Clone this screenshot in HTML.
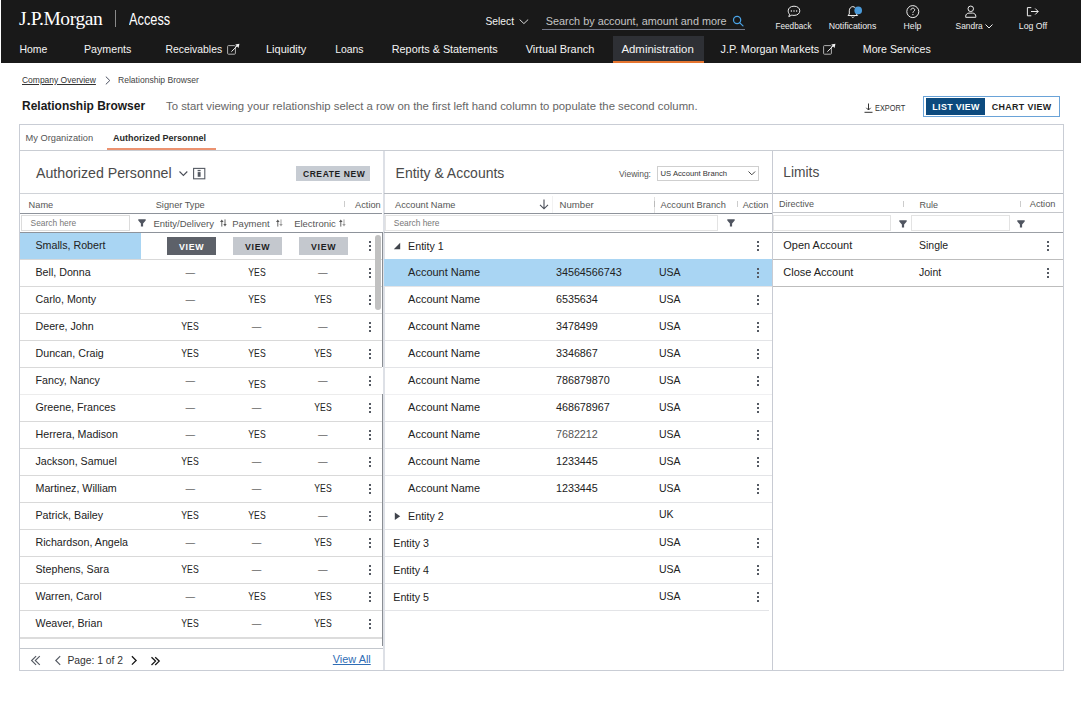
<!DOCTYPE html>
<html><head><meta charset="utf-8"><title>Relationship Browser</title>
<style>
html,body{margin:0;padding:0;background:#fff;width:1083px;height:727px;overflow:hidden;}
body{position:relative;font-family:"Liberation Sans",sans-serif;}
.t{position:absolute;white-space:nowrap;font-family:"Liberation Sans",sans-serif;}
.r{position:absolute;display:block;}
</style></head><body>
<div class="r" style="left:1px;top:0px;width:1080px;height:63px;background:#191919;"></div>
<div class="t" style="left:19px;top:9.00px;line-height:20px;font-size:19.5px;color:#fff;font-weight:normal;font-family:'Liberation Serif',serif;letter-spacing:-0.4px;">J.P.Morgan</div>
<div class="r" style="left:115px;top:10px;width:1px;height:17px;background:#8a8a8a;"></div>
<div class="t" style="left:128.6px;top:8.70px;line-height:20px;font-size:16.3px;color:#fff;font-weight:normal;transform:scaleX(0.785);transform-origin:0 50%;">Access</div>
<div class="t" style="left:485.5px;top:11.60px;line-height:20px;font-size:10.25px;color:#f2f2f2;font-weight:normal;">Select</div>
<svg class="r" style="left:519px;top:19px;" width="10" height="6" viewBox="0 0 10 6"><path d="M0.6 0.5 L4.9 4.6 L9.2 0.5" fill="none" stroke="#e6e6e6" stroke-width="0.95"/></svg>
<div class="r" style="left:542px;top:29px;width:203px;height:1px;background:#74798a;"></div>
<div class="t" style="left:545.8px;top:10.90px;line-height:20px;font-size:10.85px;color:#c4c4c4;font-weight:normal;">Search by account, amount and more</div>
<svg class="r" style="left:732px;top:15px;" width="13" height="13" viewBox="0 0 13 13"><circle cx="5.1" cy="5.0" r="3.6" fill="none" stroke="#4aa3e6" stroke-width="1.25"/><path d="M7.6 7.6 L11 10.9" stroke="#4aa3e6" stroke-width="1.25" stroke-linecap="round"/></svg>
<svg class="r" style="left:787px;top:5px;" width="14" height="13" viewBox="0 0 14 13"><path d="M7 1.2 C10.6 1.2 12.8 3.2 12.8 5.8 C12.8 8.4 10.6 10.4 7 10.4 C6.2 10.4 5.4 10.3 4.8 10.1 L1.8 11.6 L2.6 9.2 C1.6 8.4 1.2 7.2 1.2 5.8 C1.2 3.2 3.4 1.2 7 1.2 Z" fill="none" stroke="#eee" stroke-width="1"/><circle cx="4.4" cy="6.1" r="0.75" fill="#eee"/><circle cx="7" cy="6.1" r="0.75" fill="#eee"/><circle cx="9.6" cy="6.1" r="0.75" fill="#eee"/></svg>
<div class="t" style="left:693.5px;width:200px;text-align:center;top:16.50px;line-height:20px;font-size:8.2px;color:#eee;font-weight:normal;">Feedback</div>
<svg class="r" style="left:845px;top:4px;" width="18" height="15" viewBox="0 0 18 15"><path d="M3 11.5 L4.3 10 L4.3 6.8 C4.3 4.4 5.8 2.8 7.8 2.6 C9.8 2.8 11.3 4.4 11.3 6.8 L11.3 10 L12.6 11.5 Z" fill="none" stroke="#eee" stroke-width="1"/><path d="M6.4 12.6 C6.8 13.6 8.8 13.6 9.2 12.6" fill="none" stroke="#eee" stroke-width="1"/><circle cx="13.2" cy="6.4" r="3.8" fill="#4a9ad9"/></svg>
<div class="t" style="left:752.5px;width:200px;text-align:center;top:15.50px;line-height:20px;font-size:8.76px;color:#eee;font-weight:normal;">Notifications</div>
<svg class="r" style="left:905px;top:4px;" width="16" height="16" viewBox="0 0 16 16"><circle cx="7.8" cy="7.6" r="6" fill="none" stroke="#eee" stroke-width="1"/><path d="M5.9 6.2 C5.9 4.9 6.8 4.2 7.8 4.2 C8.9 4.2 9.7 4.9 9.7 5.9 C9.7 7.2 7.9 7.3 7.9 8.8" fill="none" stroke="#eee" stroke-width="1"/><circle cx="7.9" cy="10.6" r="0.7" fill="#eee"/></svg>
<div class="t" style="left:812.5px;width:200px;text-align:center;top:15.50px;line-height:20px;font-size:8.7px;color:#eee;font-weight:normal;">Help</div>
<svg class="r" style="left:963px;top:4px;" width="16" height="16" viewBox="0 0 16 16"><circle cx="7.75" cy="4.8" r="2.75" fill="none" stroke="#eee" stroke-width="1"/><path d="M2.7 13.3 L2.7 12.2 C2.7 10.3 4.2 9.1 6 9.1 L9.5 9.1 C11.3 9.1 12.8 10.3 12.8 12.2 L12.8 13.3 Z" fill="none" stroke="#eee" stroke-width="1"/></svg>
<div class="t" style="left:955.6px;top:15.50px;line-height:20px;font-size:8.4px;color:#eee;font-weight:normal;">Sandra</div>
<svg class="r" style="left:985px;top:24px;" width="8" height="5" viewBox="0 0 8 5"><path d="M0.5 0.5 L4 4 L7.5 0.5" fill="none" stroke="#eee" stroke-width="1"/></svg>
<svg class="r" style="left:1025px;top:4px;" width="16" height="16" viewBox="0 0 16 16"><path d="M6.3 3.6 L2.4 3.6 L2.4 11.8 L6.3 11.8" fill="none" stroke="#eee" stroke-width="1"/><path d="M6 7.5 L13.2 7.5 M10.2 4.5 L13.2 7.5 L10.2 10.5" fill="none" stroke="#eee" stroke-width="1"/></svg>
<div class="t" style="left:933px;width:200px;text-align:center;top:15.50px;line-height:20px;font-size:8.7px;color:#eee;font-weight:normal;">Log Off</div>
<div class="r" style="left:613px;top:36px;width:91px;height:27px;background:#2e3035;"></div>
<div class="r" style="left:613px;top:61px;width:91px;height:2px;background:#e5742f;"></div>
<div class="t" style="left:19.4px;top:40.20px;line-height:20px;font-size:10.49px;color:#f4f4f4;font-weight:normal;">Home</div>
<div class="t" style="left:84.0px;top:39.20px;line-height:20px;font-size:10.66px;color:#f4f4f4;font-weight:normal;">Payments</div>
<div class="t" style="left:165.6px;top:40.20px;line-height:20px;font-size:10.38px;color:#f4f4f4;font-weight:normal;">Receivables</div>
<div class="t" style="left:266.0px;top:39.20px;line-height:20px;font-size:11.01px;color:#f4f4f4;font-weight:normal;">Liquidity</div>
<div class="t" style="left:335.2px;top:40.20px;line-height:20px;font-size:10.42px;color:#f4f4f4;font-weight:normal;">Loans</div>
<div class="t" style="left:391.79999999999995px;top:39.20px;line-height:20px;font-size:10.82px;color:#f4f4f4;font-weight:normal;">Reports &amp; Statements</div>
<div class="t" style="left:525.6999999999999px;top:39.20px;line-height:20px;font-size:10.98px;color:#f4f4f4;font-weight:normal;">Virtual Branch</div>
<div class="t" style="left:621.4px;top:39.20px;line-height:20px;font-size:11.43px;color:#f4f4f4;font-weight:normal;">Administration</div>
<div class="t" style="left:720.6px;top:39.20px;line-height:20px;font-size:10.84px;color:#f4f4f4;font-weight:normal;">J.P. Morgan Markets</div>
<div class="t" style="left:862.8px;top:39.20px;line-height:20px;font-size:10.63px;color:#f4f4f4;font-weight:normal;">More Services</div>
<svg class="r" style="left:226px;top:43px;" width="14" height="13" viewBox="0 0 14 13"><rect x="1.6" y="2.6" width="7.8" height="8.6" rx="0.8" fill="none" stroke="#b0b0b0" stroke-width="1"/><path d="M5.4 8.7 L11.3 2.8" stroke="#f4f4f4" stroke-width="1"/><path d="M13.4 0.75 L9.2 1.5 L12.6 4.9 Z" fill="#f4f4f4"/></svg>
<svg class="r" style="left:822px;top:43px;" width="14" height="13" viewBox="0 0 14 13"><rect x="1.6" y="2.6" width="7.8" height="8.6" rx="0.8" fill="none" stroke="#b0b0b0" stroke-width="1"/><path d="M5.4 8.7 L11.3 2.8" stroke="#f4f4f4" stroke-width="1"/><path d="M13.4 0.75 L9.2 1.5 L12.6 4.9 Z" fill="#f4f4f4"/></svg>
<div class="t" style="left:22px;top:70.00px;line-height:20px;font-size:8.48px;color:#333;font-weight:normal;text-decoration:underline;">Company Overview</div>
<svg class="r" style="left:105px;top:76px;" width="6" height="9" viewBox="0 0 6 9"><path d="M0.8 0.6 L4.8 4.5 L0.8 8.4" fill="none" stroke="#4a5060" stroke-width="1"/></svg>
<div class="t" style="left:118px;top:70.00px;line-height:20px;font-size:8.57px;color:#444;font-weight:normal;">Relationship Browser</div>
<div class="t" style="left:22px;top:96.00px;line-height:20px;font-size:11.97px;color:#1a1a1a;font-weight:bold;">Relationship Browser</div>
<div class="t" style="left:166px;top:96.00px;line-height:20px;font-size:11.35px;color:#666;font-weight:normal;">To start viewing your relationship select a row on the first left hand column to populate the second column.</div>
<svg class="r" style="left:864px;top:103px;" width="9" height="10" viewBox="0 0 9 10"><path d="M4.5 0.5 L4.5 7 M2.3 4.8 L4.5 7 L6.7 4.8" fill="none" stroke="#333" stroke-width="1"/><path d="M0.5 9.3 L8.5 9.3" stroke="#333" stroke-width="1"/></svg>
<div class="t" style="left:874.8px;top:98.20px;line-height:20px;font-size:9.6px;color:#333;font-weight:normal;transform:scaleX(0.77);transform-origin:0 50%;">EXPORT</div>
<div class="r" style="left:923px;top:96px;width:137px;height:21px;background:#fff;border:1px solid #6aa3d8;box-sizing:border-box;"></div>
<div class="r" style="left:926px;top:98px;width:59px;height:17px;background:#0c4a7e;"></div>
<div class="t" style="left:932.3px;top:96.80px;line-height:20px;font-size:8.9px;color:#fff;font-weight:bold;letter-spacing:0.35px;">LIST VIEW</div>
<div class="t" style="left:991.8px;top:96.80px;line-height:20px;font-size:8.9px;color:#1e1e1e;font-weight:bold;letter-spacing:0.35px;">CHART VIEW</div>
<div class="r" style="left:19px;top:124px;width:1045px;height:547px;background:#fff;border:1px solid #c9cdd5;box-sizing:border-box;"></div>
<div class="t" style="left:25.5px;top:128.00px;line-height:20px;font-size:9.29px;color:#555;font-weight:normal;">My Organization</div>
<div class="t" style="left:113px;top:128.00px;line-height:20px;font-size:9.0px;color:#2a2a2a;font-weight:bold;">Authorized Personnel</div>
<div class="r" style="left:20px;top:150px;width:1043px;height:1px;background:#c9cdd3;"></div>
<div class="r" style="left:107px;top:148px;width:109px;height:2px;background:#eb9270;"></div>
<div class="r" style="left:383px;top:151px;width:2px;height:519px;background:#dde0e6;"></div>
<div class="r" style="left:772px;top:151px;width:1px;height:519px;background:#c8cbd3;"></div>
<div class="t" style="left:36px;top:163.00px;line-height:20px;font-size:14.2px;color:#4a4a4a;font-weight:normal;">Authorized Personnel</div>
<svg class="r" style="left:179px;top:171px;" width="10" height="6" viewBox="0 0 10 6"><path d="M0.5 0.5 L4.4 4.4 L8.3 0.5" fill="none" stroke="#4a4e58" stroke-width="1.1"/></svg>
<svg class="r" style="left:193px;top:167px;" width="13" height="13" viewBox="0 0 13 13"><rect x="0.6" y="1.4" width="11.2" height="10.4" fill="none" stroke="#555a63" stroke-width="1.1"/><rect x="4.6" y="2.9" width="3" height="1.3" fill="#555a63"/><rect x="4.7" y="5.1" width="2.9" height="4.7" fill="#555a63"/></svg>
<div class="r" style="left:296px;top:166px;width:74px;height:15px;background:#c7ccd3;"></div>
<div class="t" style="left:302.9px;top:163.60px;line-height:20px;font-size:8.5px;color:#1e1e1e;font-weight:bold;letter-spacing:0.6px;">CREATE NEW</div>
<div class="r" style="left:20px;top:193px;width:362px;height:1px;background:#d0d3d8;"></div>
<div class="t" style="left:28.6px;top:194.80px;line-height:20px;font-size:9.22px;color:#555;font-weight:normal;">Name</div>
<div class="t" style="left:155.7px;top:194.80px;line-height:20px;font-size:9.22px;color:#555;font-weight:normal;">Signer Type</div>
<div class="r" style="left:344px;top:201px;width:1px;height:6px;background:#ccc;"></div>
<div class="t" style="left:355.1px;top:194.80px;line-height:20px;font-size:9.22px;color:#555;font-weight:normal;">Action</div>
<div class="r" style="left:20px;top:213px;width:362px;height:1px;background:#8e939b;"></div>
<div class="r" style="left:21px;top:215px;width:109px;height:16px;background:#fff;border:1px solid #dcdcdc;box-sizing:border-box;"></div>
<div class="t" style="left:30.6px;top:213.20px;line-height:20px;font-size:8.4px;color:#777;font-weight:normal;">Search here</div>
<svg class="r" style="left:138.2px;top:219.2px;" width="8" height="8" viewBox="0 0 8 8"><path d="M0.3 0.3 L7.7 0.3 L7.7 1.4 L5.1 4.4 L5.1 7.6 L2.9 7.6 L2.9 4.4 L0.3 1.4 Z" fill="#505560"/></svg>
<div class="t" style="left:153.4px;top:214.00px;line-height:20px;font-size:9.47px;color:#555;font-weight:normal;">Entity/Delivery</div>
<div class="t" style="left:232.3px;top:214.00px;line-height:20px;font-size:9.47px;color:#555;font-weight:normal;">Payment</div>
<div class="t" style="left:294.2px;top:214.00px;line-height:20px;font-size:9.47px;color:#555;font-weight:normal;">Electronic</div>
<svg class="r" style="left:219.6px;top:219.2px;" width="7" height="8" viewBox="0 0 7 8"><path d="M1.8 2 L1.8 7.6" stroke="#555" stroke-width="0.9"/><path d="M0 3 L1.8 0.4 L3.6 3 Z" fill="#555"/><path d="M5 0.4 L5 6" stroke="#555" stroke-width="0.9"/><path d="M3.3 5 L5 7.6 L6.7 5 Z" fill="#555"/></svg>
<svg class="r" style="left:275.7px;top:219.2px;" width="7" height="8" viewBox="0 0 7 8"><path d="M1.8 2 L1.8 7.6" stroke="#555" stroke-width="0.9"/><path d="M0 3 L1.8 0.4 L3.6 3 Z" fill="#555"/><path d="M5 0.4 L5 6" stroke="#999" stroke-width="0.9"/><path d="M3.3 5 L5 7.6 L6.7 5 Z" fill="#999"/></svg>
<svg class="r" style="left:338.5px;top:219.2px;" width="7" height="8" viewBox="0 0 7 8"><path d="M1.8 2 L1.8 7.6" stroke="#555" stroke-width="0.9"/><path d="M0 3 L1.8 0.4 L3.6 3 Z" fill="#555"/><path d="M5 0.4 L5 6" stroke="#999" stroke-width="0.9"/><path d="M3.3 5 L5 7.6 L6.7 5 Z" fill="#999"/></svg>
<div class="r" style="left:20px;top:232px;width:362px;height:1px;background:#8e939b;"></div>
<div class="r" style="left:20px;top:233px;width:121px;height:26px;background:#a9d5f3;"></div>
<div class="r" style="left:20px;top:259px;width:362px;height:1px;background:#d9d9d9;"></div>
<div class="t" style="left:35.5px;top:234.80px;line-height:20px;font-size:10.68px;color:#222;font-weight:normal;">Smalls, Robert</div>
<div class="r" style="left:167px;top:237px;width:49px;height:18px;background:#5d6169;"></div>
<div class="t" style="left:91.6px;width:200px;text-align:center;top:236.90px;line-height:20px;font-size:8.8px;color:#fff;font-weight:bold;letter-spacing:0.7px;">VIEW</div>
<div class="r" style="left:233px;top:237px;width:49px;height:18px;background:#c4c8ce;"></div>
<div class="t" style="left:157.60000000000002px;width:200px;text-align:center;top:236.90px;line-height:20px;font-size:8.8px;color:#1e1e1e;font-weight:bold;letter-spacing:0.7px;">VIEW</div>
<div class="r" style="left:299px;top:237px;width:49px;height:18px;background:#c4c8ce;"></div>
<div class="t" style="left:223.60000000000002px;width:200px;text-align:center;top:236.90px;line-height:20px;font-size:8.8px;color:#1e1e1e;font-weight:bold;letter-spacing:0.7px;">VIEW</div>
<div class="r" style="left:369px;top:241px;width:2px;height:2px;background:#555a63;"></div>
<div class="r" style="left:369px;top:245px;width:2px;height:2px;background:#555a63;"></div>
<div class="r" style="left:369px;top:249.3px;width:2px;height:2px;background:#555a63;"></div>
<div class="r" style="left:20px;top:286px;width:362px;height:1px;background:#d9d9d9;"></div>
<div class="t" style="left:35.5px;top:261.80px;line-height:20px;font-size:10.68px;color:#222;font-weight:normal;">Bell, Donna</div>
<div class="t" style="left:90.30000000000001px;width:200px;text-align:center;top:262.60px;line-height:20px;font-size:9.6px;color:#222;font-weight:normal;">—</div>
<div class="t" style="left:156.60000000000002px;width:200px;text-align:center;top:262.50px;line-height:20px;font-size:10.3px;color:#222;font-weight:normal;transform:scaleX(0.84);">YES</div>
<div class="t" style="left:222.8px;width:200px;text-align:center;top:262.60px;line-height:20px;font-size:9.6px;color:#222;font-weight:normal;">—</div>
<div class="r" style="left:369px;top:268px;width:2px;height:2px;background:#555a63;"></div>
<div class="r" style="left:369px;top:272px;width:2px;height:2px;background:#555a63;"></div>
<div class="r" style="left:369px;top:276.3px;width:2px;height:2px;background:#555a63;"></div>
<div class="r" style="left:20px;top:313px;width:362px;height:1px;background:#d9d9d9;"></div>
<div class="t" style="left:35.5px;top:288.80px;line-height:20px;font-size:10.68px;color:#222;font-weight:normal;">Carlo, Monty</div>
<div class="t" style="left:90.30000000000001px;width:200px;text-align:center;top:289.60px;line-height:20px;font-size:9.6px;color:#222;font-weight:normal;">—</div>
<div class="t" style="left:156.60000000000002px;width:200px;text-align:center;top:289.50px;line-height:20px;font-size:10.3px;color:#222;font-weight:normal;transform:scaleX(0.84);">YES</div>
<div class="t" style="left:222.8px;width:200px;text-align:center;top:289.50px;line-height:20px;font-size:10.3px;color:#222;font-weight:normal;transform:scaleX(0.84);">YES</div>
<div class="r" style="left:369px;top:295px;width:2px;height:2px;background:#555a63;"></div>
<div class="r" style="left:369px;top:299px;width:2px;height:2px;background:#555a63;"></div>
<div class="r" style="left:369px;top:303.3px;width:2px;height:2px;background:#555a63;"></div>
<div class="r" style="left:20px;top:340px;width:362px;height:1px;background:#d9d9d9;"></div>
<div class="t" style="left:35.5px;top:315.80px;line-height:20px;font-size:10.68px;color:#222;font-weight:normal;">Deere, John</div>
<div class="t" style="left:90.30000000000001px;width:200px;text-align:center;top:316.50px;line-height:20px;font-size:10.3px;color:#222;font-weight:normal;transform:scaleX(0.84);">YES</div>
<div class="t" style="left:156.60000000000002px;width:200px;text-align:center;top:316.60px;line-height:20px;font-size:9.6px;color:#222;font-weight:normal;">—</div>
<div class="t" style="left:222.8px;width:200px;text-align:center;top:316.60px;line-height:20px;font-size:9.6px;color:#222;font-weight:normal;">—</div>
<div class="r" style="left:369px;top:322px;width:2px;height:2px;background:#555a63;"></div>
<div class="r" style="left:369px;top:326px;width:2px;height:2px;background:#555a63;"></div>
<div class="r" style="left:369px;top:330.3px;width:2px;height:2px;background:#555a63;"></div>
<div class="r" style="left:20px;top:367px;width:362px;height:1px;background:#d9d9d9;"></div>
<div class="t" style="left:35.5px;top:342.80px;line-height:20px;font-size:10.68px;color:#222;font-weight:normal;">Duncan, Craig</div>
<div class="t" style="left:90.30000000000001px;width:200px;text-align:center;top:343.50px;line-height:20px;font-size:10.3px;color:#222;font-weight:normal;transform:scaleX(0.84);">YES</div>
<div class="t" style="left:156.60000000000002px;width:200px;text-align:center;top:343.50px;line-height:20px;font-size:10.3px;color:#222;font-weight:normal;transform:scaleX(0.84);">YES</div>
<div class="t" style="left:222.8px;width:200px;text-align:center;top:343.50px;line-height:20px;font-size:10.3px;color:#222;font-weight:normal;transform:scaleX(0.84);">YES</div>
<div class="r" style="left:369px;top:349px;width:2px;height:2px;background:#555a63;"></div>
<div class="r" style="left:369px;top:353px;width:2px;height:2px;background:#555a63;"></div>
<div class="r" style="left:369px;top:357.3px;width:2px;height:2px;background:#555a63;"></div>
<div class="r" style="left:20px;top:394px;width:362px;height:1px;background:#ececec;"></div>
<div class="t" style="left:35.5px;top:369.80px;line-height:20px;font-size:10.68px;color:#222;font-weight:normal;">Fancy, Nancy</div>
<div class="t" style="left:90.30000000000001px;width:200px;text-align:center;top:370.60px;line-height:20px;font-size:9.6px;color:#222;font-weight:normal;">—</div>
<div class="t" style="left:156.60000000000002px;width:200px;text-align:center;top:375.00px;line-height:20px;font-size:10.3px;color:#222;font-weight:normal;transform:scaleX(0.84);">YES</div>
<div class="t" style="left:222.8px;width:200px;text-align:center;top:370.60px;line-height:20px;font-size:9.6px;color:#222;font-weight:normal;">—</div>
<div class="r" style="left:369px;top:376px;width:2px;height:2px;background:#555a63;"></div>
<div class="r" style="left:369px;top:380px;width:2px;height:2px;background:#555a63;"></div>
<div class="r" style="left:369px;top:384.3px;width:2px;height:2px;background:#555a63;"></div>
<div class="r" style="left:20px;top:421px;width:362px;height:1px;background:#d9d9d9;"></div>
<div class="t" style="left:35.5px;top:396.80px;line-height:20px;font-size:10.68px;color:#222;font-weight:normal;">Greene, Frances</div>
<div class="t" style="left:90.30000000000001px;width:200px;text-align:center;top:397.60px;line-height:20px;font-size:9.6px;color:#222;font-weight:normal;">—</div>
<div class="t" style="left:156.60000000000002px;width:200px;text-align:center;top:397.60px;line-height:20px;font-size:9.6px;color:#222;font-weight:normal;">—</div>
<div class="t" style="left:222.8px;width:200px;text-align:center;top:397.50px;line-height:20px;font-size:10.3px;color:#222;font-weight:normal;transform:scaleX(0.84);">YES</div>
<div class="r" style="left:369px;top:403px;width:2px;height:2px;background:#555a63;"></div>
<div class="r" style="left:369px;top:407px;width:2px;height:2px;background:#555a63;"></div>
<div class="r" style="left:369px;top:411.3px;width:2px;height:2px;background:#555a63;"></div>
<div class="r" style="left:20px;top:448px;width:362px;height:1px;background:#d9d9d9;"></div>
<div class="t" style="left:35.5px;top:423.80px;line-height:20px;font-size:10.68px;color:#222;font-weight:normal;">Herrera, Madison</div>
<div class="t" style="left:90.30000000000001px;width:200px;text-align:center;top:424.60px;line-height:20px;font-size:9.6px;color:#222;font-weight:normal;">—</div>
<div class="t" style="left:156.60000000000002px;width:200px;text-align:center;top:424.50px;line-height:20px;font-size:10.3px;color:#222;font-weight:normal;transform:scaleX(0.84);">YES</div>
<div class="t" style="left:222.8px;width:200px;text-align:center;top:424.60px;line-height:20px;font-size:9.6px;color:#222;font-weight:normal;">—</div>
<div class="r" style="left:369px;top:430px;width:2px;height:2px;background:#555a63;"></div>
<div class="r" style="left:369px;top:434px;width:2px;height:2px;background:#555a63;"></div>
<div class="r" style="left:369px;top:438.3px;width:2px;height:2px;background:#555a63;"></div>
<div class="r" style="left:20px;top:475px;width:362px;height:1px;background:#d9d9d9;"></div>
<div class="t" style="left:35.5px;top:450.80px;line-height:20px;font-size:10.68px;color:#222;font-weight:normal;">Jackson, Samuel</div>
<div class="t" style="left:90.30000000000001px;width:200px;text-align:center;top:451.50px;line-height:20px;font-size:10.3px;color:#222;font-weight:normal;transform:scaleX(0.84);">YES</div>
<div class="t" style="left:156.60000000000002px;width:200px;text-align:center;top:451.60px;line-height:20px;font-size:9.6px;color:#222;font-weight:normal;">—</div>
<div class="t" style="left:222.8px;width:200px;text-align:center;top:451.60px;line-height:20px;font-size:9.6px;color:#222;font-weight:normal;">—</div>
<div class="r" style="left:369px;top:457px;width:2px;height:2px;background:#555a63;"></div>
<div class="r" style="left:369px;top:461px;width:2px;height:2px;background:#555a63;"></div>
<div class="r" style="left:369px;top:465.3px;width:2px;height:2px;background:#555a63;"></div>
<div class="r" style="left:20px;top:502px;width:362px;height:1px;background:#d9d9d9;"></div>
<div class="t" style="left:35.5px;top:477.80px;line-height:20px;font-size:10.68px;color:#222;font-weight:normal;">Martinez, William</div>
<div class="t" style="left:90.30000000000001px;width:200px;text-align:center;top:478.60px;line-height:20px;font-size:9.6px;color:#222;font-weight:normal;">—</div>
<div class="t" style="left:156.60000000000002px;width:200px;text-align:center;top:478.60px;line-height:20px;font-size:9.6px;color:#222;font-weight:normal;">—</div>
<div class="t" style="left:222.8px;width:200px;text-align:center;top:478.50px;line-height:20px;font-size:10.3px;color:#222;font-weight:normal;transform:scaleX(0.84);">YES</div>
<div class="r" style="left:369px;top:484px;width:2px;height:2px;background:#555a63;"></div>
<div class="r" style="left:369px;top:488px;width:2px;height:2px;background:#555a63;"></div>
<div class="r" style="left:369px;top:492.3px;width:2px;height:2px;background:#555a63;"></div>
<div class="r" style="left:20px;top:529px;width:362px;height:1px;background:#d9d9d9;"></div>
<div class="t" style="left:35.5px;top:504.80px;line-height:20px;font-size:10.68px;color:#222;font-weight:normal;">Patrick, Bailey</div>
<div class="t" style="left:90.30000000000001px;width:200px;text-align:center;top:505.50px;line-height:20px;font-size:10.3px;color:#222;font-weight:normal;transform:scaleX(0.84);">YES</div>
<div class="t" style="left:156.60000000000002px;width:200px;text-align:center;top:505.50px;line-height:20px;font-size:10.3px;color:#222;font-weight:normal;transform:scaleX(0.84);">YES</div>
<div class="t" style="left:222.8px;width:200px;text-align:center;top:505.60px;line-height:20px;font-size:9.6px;color:#222;font-weight:normal;">—</div>
<div class="r" style="left:369px;top:511px;width:2px;height:2px;background:#555a63;"></div>
<div class="r" style="left:369px;top:515px;width:2px;height:2px;background:#555a63;"></div>
<div class="r" style="left:369px;top:519.3px;width:2px;height:2px;background:#555a63;"></div>
<div class="r" style="left:20px;top:556px;width:362px;height:1px;background:#d9d9d9;"></div>
<div class="t" style="left:35.5px;top:531.80px;line-height:20px;font-size:10.68px;color:#222;font-weight:normal;">Richardson, Angela</div>
<div class="t" style="left:90.30000000000001px;width:200px;text-align:center;top:532.60px;line-height:20px;font-size:9.6px;color:#222;font-weight:normal;">—</div>
<div class="t" style="left:156.60000000000002px;width:200px;text-align:center;top:532.60px;line-height:20px;font-size:9.6px;color:#222;font-weight:normal;">—</div>
<div class="t" style="left:222.8px;width:200px;text-align:center;top:532.50px;line-height:20px;font-size:10.3px;color:#222;font-weight:normal;transform:scaleX(0.84);">YES</div>
<div class="r" style="left:369px;top:538px;width:2px;height:2px;background:#555a63;"></div>
<div class="r" style="left:369px;top:542px;width:2px;height:2px;background:#555a63;"></div>
<div class="r" style="left:369px;top:546.3px;width:2px;height:2px;background:#555a63;"></div>
<div class="r" style="left:20px;top:583px;width:362px;height:1px;background:#d9d9d9;"></div>
<div class="t" style="left:35.5px;top:558.80px;line-height:20px;font-size:10.68px;color:#222;font-weight:normal;">Stephens, Sara</div>
<div class="t" style="left:90.30000000000001px;width:200px;text-align:center;top:559.50px;line-height:20px;font-size:10.3px;color:#222;font-weight:normal;transform:scaleX(0.84);">YES</div>
<div class="t" style="left:156.60000000000002px;width:200px;text-align:center;top:559.60px;line-height:20px;font-size:9.6px;color:#222;font-weight:normal;">—</div>
<div class="t" style="left:222.8px;width:200px;text-align:center;top:559.60px;line-height:20px;font-size:9.6px;color:#222;font-weight:normal;">—</div>
<div class="r" style="left:369px;top:565px;width:2px;height:2px;background:#555a63;"></div>
<div class="r" style="left:369px;top:569px;width:2px;height:2px;background:#555a63;"></div>
<div class="r" style="left:369px;top:573.3px;width:2px;height:2px;background:#555a63;"></div>
<div class="r" style="left:20px;top:610px;width:362px;height:1px;background:#d9d9d9;"></div>
<div class="t" style="left:35.5px;top:585.80px;line-height:20px;font-size:10.68px;color:#222;font-weight:normal;">Warren, Carol</div>
<div class="t" style="left:90.30000000000001px;width:200px;text-align:center;top:586.60px;line-height:20px;font-size:9.6px;color:#222;font-weight:normal;">—</div>
<div class="t" style="left:156.60000000000002px;width:200px;text-align:center;top:586.50px;line-height:20px;font-size:10.3px;color:#222;font-weight:normal;transform:scaleX(0.84);">YES</div>
<div class="t" style="left:222.8px;width:200px;text-align:center;top:586.50px;line-height:20px;font-size:10.3px;color:#222;font-weight:normal;transform:scaleX(0.84);">YES</div>
<div class="r" style="left:369px;top:592px;width:2px;height:2px;background:#555a63;"></div>
<div class="r" style="left:369px;top:596px;width:2px;height:2px;background:#555a63;"></div>
<div class="r" style="left:369px;top:600.3px;width:2px;height:2px;background:#555a63;"></div>
<div class="r" style="left:20px;top:637px;width:362px;height:1px;background:#d9d9d9;"></div>
<div class="t" style="left:35.5px;top:612.80px;line-height:20px;font-size:10.68px;color:#222;font-weight:normal;">Weaver, Brian</div>
<div class="t" style="left:90.30000000000001px;width:200px;text-align:center;top:613.50px;line-height:20px;font-size:10.3px;color:#222;font-weight:normal;transform:scaleX(0.84);">YES</div>
<div class="t" style="left:156.60000000000002px;width:200px;text-align:center;top:613.60px;line-height:20px;font-size:9.6px;color:#222;font-weight:normal;">—</div>
<div class="t" style="left:222.8px;width:200px;text-align:center;top:613.50px;line-height:20px;font-size:10.3px;color:#222;font-weight:normal;transform:scaleX(0.84);">YES</div>
<div class="r" style="left:369px;top:619px;width:2px;height:2px;background:#555a63;"></div>
<div class="r" style="left:369px;top:623px;width:2px;height:2px;background:#555a63;"></div>
<div class="r" style="left:369px;top:627.3px;width:2px;height:2px;background:#555a63;"></div>
<div class="r" style="left:20px;top:637px;width:362px;height:2px;background:#dcdcdc;"></div>
<div class="r" style="left:375px;top:235px;width:6px;height:75px;background:#c1c1c1;border-radius:3px;"></div>
<div class="r" style="left:382px;top:232px;width:1px;height:135px;background:#8a8e94;"></div>
<div class="r" style="left:382px;top:394px;width:1px;height:252px;background:#8a8e94;"></div>
<div class="r" style="left:20px;top:648px;width:363px;height:1px;background:#c3c7cd;"></div>
<div class="t" style="left:67.4px;top:651.00px;line-height:20px;font-size:10.33px;color:#333;font-weight:normal;">Page: 1 of 2</div>
<svg class="r" style="left:30px;top:655px;" width="12" height="11" viewBox="0 0 12 11"><path d="M6.1 1.1 L1.6 5.5 L6.1 9.9 M9.8 1.1 L5.3 5.5 L9.8 9.9" fill="none" stroke="#555a63" stroke-width="1.15"/></svg>
<svg class="r" style="left:53.5px;top:655px;" width="8" height="11" viewBox="0 0 8 11"><path d="M6.2 1.1 L1.8 5.5 L6.2 9.9" fill="none" stroke="#555a63" stroke-width="1.15"/></svg>
<svg class="r" style="left:129.5px;top:655px;" width="8" height="11" viewBox="0 0 8 11"><path d="M1.9 1.3 L6.1 5.45 L1.9 9.6" fill="none" stroke="#151515" stroke-width="1.3"/></svg>
<svg class="r" style="left:150px;top:655px;" width="12" height="12" viewBox="0 0 12 12"><path d="M1.5 2.2 L5.5 6.1 L1.5 10 M5.2 2.2 L9.2 6.1 L5.2 10" fill="none" stroke="#151515" stroke-width="1.3"/></svg>
<div class="t" style="left:332.8px;top:648.80px;line-height:20px;font-size:10.9px;color:#2f6db5;font-weight:normal;text-decoration:underline;">View All</div>
<div class="t" style="left:395.6px;top:162.50px;line-height:20px;font-size:13.97px;color:#4a4a4a;font-weight:normal;">Entity &amp; Accounts</div>
<div class="t" style="left:619px;top:163.60px;line-height:20px;font-size:8.51px;color:#555;font-weight:normal;">Viewing:</div>
<div class="r" style="left:657px;top:166px;width:102px;height:15px;background:#fff;border:1px solid #cfcfcf;box-sizing:border-box;"></div>
<div class="t" style="left:660.6px;top:163.50px;line-height:20px;font-size:7.66px;color:#333;font-weight:normal;">US Account Branch</div>
<svg class="r" style="left:748px;top:171px;" width="8" height="5" viewBox="0 0 8 5"><path d="M0.5 0.5 L3.8 3.8 L7.1 0.5" fill="none" stroke="#444" stroke-width="1"/></svg>
<div class="r" style="left:384px;top:193px;width:388px;height:1px;background:#b9bdc3;"></div>
<div class="t" style="left:395px;top:194.80px;line-height:20px;font-size:9.22px;color:#555;font-weight:normal;">Account Name</div>
<svg class="r" style="left:538.5px;top:198.5px;" width="11" height="11" viewBox="0 0 11 11"><path d="M5 0.6 L5 9.8 M1 5.8 L5 9.8 L9 5.8" fill="none" stroke="#4a4e58" stroke-width="1.1"/></svg>
<div class="r" style="left:552px;top:200px;width:1px;height:6px;background:#ccc;"></div>
<div class="r" style="left:552px;top:196px;width:1px;height:17px;background:#f2f2f2;"></div>
<div class="t" style="left:559.6px;top:194.80px;line-height:20px;font-size:9.6px;color:#555;font-weight:normal;">Number</div>
<div class="r" style="left:654px;top:197px;width:1px;height:17px;background:#e0e0e0;"></div>
<div class="r" style="left:654px;top:201px;width:1px;height:6px;background:#bbb;"></div>
<div class="t" style="left:660.6px;top:194.80px;line-height:20px;font-size:9.24px;color:#555;font-weight:normal;">Account Branch</div>
<div class="r" style="left:737px;top:201px;width:1px;height:6px;background:#ccc;"></div>
<div class="t" style="left:742.7px;top:194.80px;line-height:20px;font-size:9.22px;color:#555;font-weight:normal;">Action</div>
<div class="r" style="left:384px;top:213px;width:388px;height:1px;background:#8e939b;"></div>
<div class="r" style="left:385px;top:215px;width:333px;height:16px;background:#fff;border:1px solid #e3e3e3;box-sizing:border-box;"></div>
<div class="t" style="left:393.8px;top:213.20px;line-height:20px;font-size:8.4px;color:#777;font-weight:normal;">Search here</div>
<svg class="r" style="left:727px;top:219px;" width="8" height="8" viewBox="0 0 8 8"><path d="M0.3 0.3 L7.7 0.3 L7.7 1.4 L5.1 4.4 L5.1 7.6 L2.9 7.6 L2.9 4.4 L0.3 1.4 Z" fill="#505560"/></svg>
<div class="r" style="left:384px;top:232px;width:388px;height:1px;background:#9ca0a6;"></div>
<div class="r" style="left:385px;top:259px;width:387px;height:1px;background:#e3e4e7;"></div>
<svg class="r" style="left:393px;top:242px;" width="8" height="8" viewBox="0 0 8 8"><path d="M7.2 0.8 L7.2 7.2 L0.8 7.2 Z" fill="#40444c"/></svg>
<div class="t" style="left:408.1px;top:235.70px;line-height:20px;font-size:10.68px;color:#222;font-weight:normal;">Entity 1</div>
<div class="r" style="left:757px;top:241px;width:2px;height:2px;background:#555a63;"></div>
<div class="r" style="left:757px;top:245px;width:2px;height:2px;background:#555a63;"></div>
<div class="r" style="left:757px;top:249.3px;width:2px;height:2px;background:#555a63;"></div>
<div class="r" style="left:384px;top:259px;width:388px;height:27px;background:#a9d5f3;"></div>
<div class="r" style="left:385px;top:286px;width:387px;height:1px;background:#e3e4e7;"></div>
<div class="t" style="left:408.1px;top:261.80px;line-height:20px;font-size:10.98px;color:#222;font-weight:normal;">Account Name</div>
<div class="t" style="left:555.9px;top:261.80px;line-height:20px;font-size:10.79px;color:#222;font-weight:normal;">34564566743</div>
<div class="t" style="left:658.9px;top:261.80px;line-height:20px;font-size:10.5px;color:#222;font-weight:normal;">USA</div>
<div class="r" style="left:757px;top:268px;width:2px;height:2px;background:#555a63;"></div>
<div class="r" style="left:757px;top:272px;width:2px;height:2px;background:#555a63;"></div>
<div class="r" style="left:757px;top:276.3px;width:2px;height:2px;background:#555a63;"></div>
<div class="r" style="left:385px;top:313px;width:387px;height:1px;background:#e3e4e7;"></div>
<div class="t" style="left:408.1px;top:288.80px;line-height:20px;font-size:10.98px;color:#222;font-weight:normal;">Account Name</div>
<div class="t" style="left:555.9px;top:288.80px;line-height:20px;font-size:10.79px;color:#222;font-weight:normal;">6535634</div>
<div class="t" style="left:658.9px;top:288.80px;line-height:20px;font-size:10.5px;color:#222;font-weight:normal;">USA</div>
<div class="r" style="left:757px;top:295px;width:2px;height:2px;background:#555a63;"></div>
<div class="r" style="left:757px;top:299px;width:2px;height:2px;background:#555a63;"></div>
<div class="r" style="left:757px;top:303.3px;width:2px;height:2px;background:#555a63;"></div>
<div class="r" style="left:385px;top:340px;width:387px;height:1px;background:#e3e4e7;"></div>
<div class="t" style="left:408.1px;top:315.80px;line-height:20px;font-size:10.98px;color:#222;font-weight:normal;">Account Name</div>
<div class="t" style="left:555.9px;top:315.80px;line-height:20px;font-size:10.79px;color:#222;font-weight:normal;">3478499</div>
<div class="t" style="left:658.9px;top:315.80px;line-height:20px;font-size:10.5px;color:#222;font-weight:normal;">USA</div>
<div class="r" style="left:757px;top:322px;width:2px;height:2px;background:#555a63;"></div>
<div class="r" style="left:757px;top:326px;width:2px;height:2px;background:#555a63;"></div>
<div class="r" style="left:757px;top:330.3px;width:2px;height:2px;background:#555a63;"></div>
<div class="r" style="left:385px;top:367px;width:387px;height:1px;background:#e3e4e7;"></div>
<div class="t" style="left:408.1px;top:342.80px;line-height:20px;font-size:10.98px;color:#222;font-weight:normal;">Account Name</div>
<div class="t" style="left:555.9px;top:342.80px;line-height:20px;font-size:10.79px;color:#222;font-weight:normal;">3346867</div>
<div class="t" style="left:658.9px;top:342.80px;line-height:20px;font-size:10.5px;color:#222;font-weight:normal;">USA</div>
<div class="r" style="left:757px;top:349px;width:2px;height:2px;background:#555a63;"></div>
<div class="r" style="left:757px;top:353px;width:2px;height:2px;background:#555a63;"></div>
<div class="r" style="left:757px;top:357.3px;width:2px;height:2px;background:#555a63;"></div>
<div class="r" style="left:385px;top:394px;width:387px;height:1px;background:#f0f0f2;"></div>
<div class="t" style="left:408.1px;top:369.80px;line-height:20px;font-size:10.98px;color:#222;font-weight:normal;">Account Name</div>
<div class="t" style="left:555.9px;top:369.80px;line-height:20px;font-size:10.79px;color:#222;font-weight:normal;">786879870</div>
<div class="t" style="left:658.9px;top:369.80px;line-height:20px;font-size:10.5px;color:#222;font-weight:normal;">USA</div>
<div class="r" style="left:757px;top:376px;width:2px;height:2px;background:#555a63;"></div>
<div class="r" style="left:757px;top:380px;width:2px;height:2px;background:#555a63;"></div>
<div class="r" style="left:757px;top:384.3px;width:2px;height:2px;background:#555a63;"></div>
<div class="r" style="left:385px;top:421px;width:387px;height:1px;background:#e3e4e7;"></div>
<div class="t" style="left:408.1px;top:396.80px;line-height:20px;font-size:10.98px;color:#222;font-weight:normal;">Account Name</div>
<div class="t" style="left:555.9px;top:396.80px;line-height:20px;font-size:10.79px;color:#222;font-weight:normal;">468678967</div>
<div class="t" style="left:658.9px;top:396.80px;line-height:20px;font-size:10.5px;color:#222;font-weight:normal;">USA</div>
<div class="r" style="left:757px;top:403px;width:2px;height:2px;background:#555a63;"></div>
<div class="r" style="left:757px;top:407px;width:2px;height:2px;background:#555a63;"></div>
<div class="r" style="left:757px;top:411.3px;width:2px;height:2px;background:#555a63;"></div>
<div class="r" style="left:385px;top:448px;width:387px;height:1px;background:#e3e4e7;"></div>
<div class="t" style="left:408.1px;top:423.80px;line-height:20px;font-size:10.98px;color:#222;font-weight:normal;">Account Name</div>
<div class="t" style="left:555.9px;top:423.80px;line-height:20px;font-size:10.79px;color:#555;font-weight:normal;">7682212</div>
<div class="t" style="left:658.9px;top:423.80px;line-height:20px;font-size:10.5px;color:#222;font-weight:normal;">USA</div>
<div class="r" style="left:757px;top:430px;width:2px;height:2px;background:#555a63;"></div>
<div class="r" style="left:757px;top:434px;width:2px;height:2px;background:#555a63;"></div>
<div class="r" style="left:757px;top:438.3px;width:2px;height:2px;background:#555a63;"></div>
<div class="r" style="left:385px;top:475px;width:387px;height:1px;background:#e3e4e7;"></div>
<div class="t" style="left:408.1px;top:450.80px;line-height:20px;font-size:10.98px;color:#222;font-weight:normal;">Account Name</div>
<div class="t" style="left:555.9px;top:450.80px;line-height:20px;font-size:10.79px;color:#222;font-weight:normal;">1233445</div>
<div class="t" style="left:658.9px;top:450.80px;line-height:20px;font-size:10.5px;color:#222;font-weight:normal;">USA</div>
<div class="r" style="left:757px;top:457px;width:2px;height:2px;background:#555a63;"></div>
<div class="r" style="left:757px;top:461px;width:2px;height:2px;background:#555a63;"></div>
<div class="r" style="left:757px;top:465.3px;width:2px;height:2px;background:#555a63;"></div>
<div class="r" style="left:385px;top:502px;width:387px;height:1px;background:#e3e4e7;"></div>
<div class="t" style="left:408.1px;top:477.80px;line-height:20px;font-size:10.98px;color:#222;font-weight:normal;">Account Name</div>
<div class="t" style="left:555.9px;top:477.80px;line-height:20px;font-size:10.79px;color:#222;font-weight:normal;">1233445</div>
<div class="t" style="left:658.9px;top:477.80px;line-height:20px;font-size:10.5px;color:#222;font-weight:normal;">USA</div>
<div class="r" style="left:757px;top:484px;width:2px;height:2px;background:#555a63;"></div>
<div class="r" style="left:757px;top:488px;width:2px;height:2px;background:#555a63;"></div>
<div class="r" style="left:757px;top:492.3px;width:2px;height:2px;background:#555a63;"></div>
<div class="r" style="left:385px;top:529px;width:387px;height:1px;background:#e3e4e7;"></div>
<svg class="r" style="left:394px;top:512px;" width="7" height="9" viewBox="0 0 7 9"><path d="M0.8 0.5 L6.2 4.3 L0.8 8.1 Z" fill="#40444c"/></svg>
<div class="t" style="left:408.1px;top:505.60px;line-height:20px;font-size:10.68px;color:#222;font-weight:normal;">Entity 2</div>
<div class="t" style="left:658.9px;top:504.00px;line-height:20px;font-size:10.5px;color:#222;font-weight:normal;">UK</div>
<div class="r" style="left:385px;top:556px;width:387px;height:1px;background:#e3e4e7;"></div>
<div class="t" style="left:393.3px;top:532.60px;line-height:20px;font-size:10.68px;color:#222;font-weight:normal;">Entity 3</div>
<div class="t" style="left:658.9px;top:532.10px;line-height:20px;font-size:10.5px;color:#222;font-weight:normal;">USA</div>
<div class="r" style="left:757px;top:538px;width:2px;height:2px;background:#555a63;"></div>
<div class="r" style="left:757px;top:542px;width:2px;height:2px;background:#555a63;"></div>
<div class="r" style="left:757px;top:546.3px;width:2px;height:2px;background:#555a63;"></div>
<div class="r" style="left:385px;top:583px;width:387px;height:1px;background:#e3e4e7;"></div>
<div class="t" style="left:393.3px;top:559.60px;line-height:20px;font-size:10.68px;color:#222;font-weight:normal;">Entity 4</div>
<div class="t" style="left:658.9px;top:559.10px;line-height:20px;font-size:10.5px;color:#222;font-weight:normal;">USA</div>
<div class="r" style="left:757px;top:565px;width:2px;height:2px;background:#555a63;"></div>
<div class="r" style="left:757px;top:569px;width:2px;height:2px;background:#555a63;"></div>
<div class="r" style="left:757px;top:573.3px;width:2px;height:2px;background:#555a63;"></div>
<div class="r" style="left:385px;top:610px;width:384px;height:1px;background:#e3e4e7;"></div>
<div class="t" style="left:393.3px;top:586.60px;line-height:20px;font-size:10.68px;color:#222;font-weight:normal;">Entity 5</div>
<div class="t" style="left:658.9px;top:586.10px;line-height:20px;font-size:10.5px;color:#222;font-weight:normal;">USA</div>
<div class="r" style="left:757px;top:592px;width:2px;height:2px;background:#555a63;"></div>
<div class="r" style="left:757px;top:596px;width:2px;height:2px;background:#555a63;"></div>
<div class="r" style="left:757px;top:600.3px;width:2px;height:2px;background:#555a63;"></div>
<div class="t" style="left:783.3px;top:162.70px;line-height:20px;font-size:13.79px;color:#4a4a4a;font-weight:normal;">Limits</div>
<div class="r" style="left:773px;top:193px;width:290px;height:1px;background:#b9bdc3;"></div>
<div class="t" style="left:779px;top:194.30px;line-height:20px;font-size:9.0px;color:#555;font-weight:normal;">Directive</div>
<div class="r" style="left:903px;top:201px;width:1px;height:6px;background:#ccc;"></div>
<div class="t" style="left:919.6px;top:194.60px;line-height:20px;font-size:9.0px;color:#555;font-weight:normal;">Rule</div>
<div class="r" style="left:1020px;top:201px;width:1px;height:6px;background:#ccc;"></div>
<div class="t" style="left:1029.8px;top:194.30px;line-height:20px;font-size:9.22px;color:#555;font-weight:normal;">Action</div>
<div class="r" style="left:773px;top:212px;width:290px;height:1px;background:#c4c6ca;"></div>
<div class="r" style="left:773px;top:215px;width:118px;height:16px;background:#fff;border:1px solid #e3e3e3;box-sizing:border-box;"></div>
<svg class="r" style="left:898.8px;top:219.5px;" width="8" height="8" viewBox="0 0 8 8"><path d="M0.3 0.3 L7.7 0.3 L7.7 1.4 L5.1 4.4 L5.1 7.6 L2.9 7.6 L2.9 4.4 L0.3 1.4 Z" fill="#505560"/></svg>
<div class="r" style="left:911px;top:215px;width:99px;height:16px;background:#fff;border:1px solid #e3e3e3;box-sizing:border-box;"></div>
<svg class="r" style="left:1017.4px;top:219.5px;" width="8" height="8" viewBox="0 0 8 8"><path d="M0.3 0.3 L7.7 0.3 L7.7 1.4 L5.1 4.4 L5.1 7.6 L2.9 7.6 L2.9 4.4 L0.3 1.4 Z" fill="#505560"/></svg>
<div class="r" style="left:773px;top:232px;width:290px;height:1px;background:#9ca0a6;"></div>
<div class="r" style="left:773px;top:259px;width:290px;height:1px;background:#bdbdbd;"></div>
<div class="t" style="left:783.3px;top:234.80px;line-height:20px;font-size:10.98px;color:#222;font-weight:normal;">Open Account</div>
<div class="t" style="left:919px;top:234.80px;line-height:20px;font-size:10.5px;color:#222;font-weight:normal;">Single</div>
<div class="r" style="left:1046.6px;top:241px;width:2px;height:2px;background:#555a63;"></div>
<div class="r" style="left:1046.6px;top:245px;width:2px;height:2px;background:#555a63;"></div>
<div class="r" style="left:1046.6px;top:249.3px;width:2px;height:2px;background:#555a63;"></div>
<div class="r" style="left:773px;top:286px;width:290px;height:1px;background:#bdbdbd;"></div>
<div class="t" style="left:783.3px;top:261.80px;line-height:20px;font-size:10.98px;color:#222;font-weight:normal;">Close Account</div>
<div class="t" style="left:919px;top:261.80px;line-height:20px;font-size:10.5px;color:#222;font-weight:normal;">Joint</div>
<div class="r" style="left:1046.6px;top:268px;width:2px;height:2px;background:#555a63;"></div>
<div class="r" style="left:1046.6px;top:272px;width:2px;height:2px;background:#555a63;"></div>
<div class="r" style="left:1046.6px;top:276.3px;width:2px;height:2px;background:#555a63;"></div>
</body></html>
